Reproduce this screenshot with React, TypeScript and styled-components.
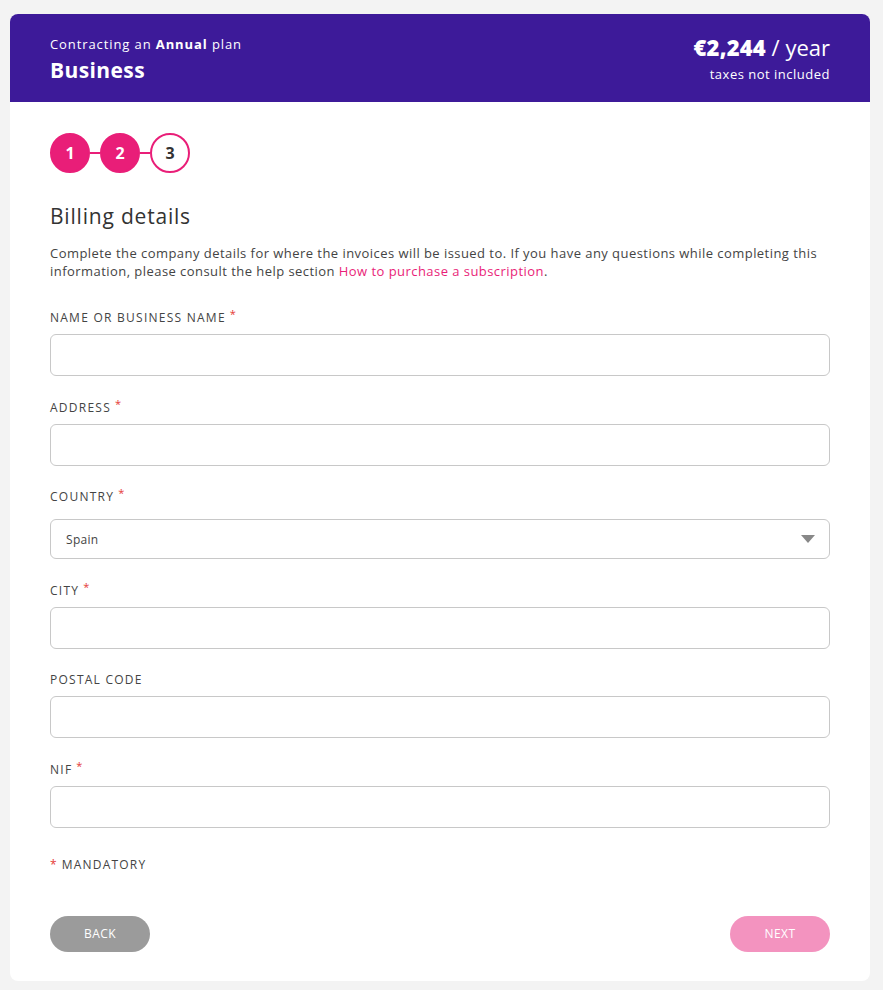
import React from 'react'
import styled, { createGlobalStyle } from 'styled-components'

const GlobalStyle = createGlobalStyle`
  html, body {
    margin: 0;
    padding: 0;
    background: #f3f3f3;
    font-family: "Open Sans", "Liberation Sans", sans-serif;
  }
  * {
    box-sizing: border-box;
  }
`

const Page = styled.div`
  padding: 14px 13px 9px 10px;
`

const Card = styled.div`
  background: #fff;
  border-radius: 8px;
  overflow: hidden;
`

const Header = styled.div`
  background: #3d1a99;
  color: #fff;
  height: 88px;
  padding: 0 40px;
  display: flex;
  justify-content: space-between;
  align-items: flex-start;
`

const PlanInfo = styled.div`
  padding-top: 22px;
`

const Subtitle = styled.div`
  font-size: 13px;
  line-height: 16px;
  letter-spacing: 0.9px;
  b {
    font-weight: 700;
  }
`

const PlanName = styled.div`
  font-size: 21px;
  font-weight: 700;
  line-height: 26px;
  letter-spacing: 0.4px;
  margin-top: 5px;
`

const PriceInfo = styled.div`
  padding-top: 19px;
  text-align: right;
`

const Price = styled.div`
  font-size: 22px;
  line-height: 28px;
  b {
    font-weight: 800;
    letter-spacing: 0.2px;
  }
`

const Taxes = styled.div`
  font-size: 13px;
  line-height: 16px;
  letter-spacing: 0.5px;
  margin-top: 5px;
`

const Body = styled.div`
  padding: 31px 40px 29px;
`

const Steps = styled.div`
  display: flex;
  align-items: center;
`

const Step = styled.div<{ done?: boolean }>`
  width: 40px;
  height: 40px;
  border-radius: 50%;
  border: 2px solid #e91e78;
  background: ${p => (p.done ? '#e91e78' : '#fff')};
  color: ${p => (p.done ? '#fff' : '#333')};
  font-weight: 700;
  font-size: 16px;
  display: flex;
  align-items: center;
  justify-content: center;
`

const Connector = styled.div`
  width: 10px;
  height: 2px;
  background: #e91e78;
`

const Title = styled.h2`
  margin: 29px 0 0;
  font-size: 21px;
  font-weight: 400;
  line-height: 28px;
  letter-spacing: 0.8px;
  color: #333;
`

const Intro = styled.p`
  margin: 14px 0 0;
  font-size: 13px;
  line-height: 18px;
  letter-spacing: 0.45px;
  color: #444;
  a {
    color: #e91e78;
    text-decoration: none;
  }
`

const Form = styled.div`
  margin-top: 30px;
  display: flex;
  flex-direction: column;
  gap: 23.5px;
`

const Field = styled.div<{ select?: boolean }>`
  display: flex;
  flex-direction: column;
  gap: ${p => (p.select ? '15px' : '9px')};
`

const Label = styled.label`
  font-size: 12px;
  line-height: 15px;
  letter-spacing: 1.25px;
  text-transform: uppercase;
  color: #444;
`

const Star = styled.sup`
  color: #e53935;
  font-size: 11px;
  margin-left: 4px;
  vertical-align: 4px;
  line-height: 0;
`

const Input = styled.input`
  height: 42px;
  border: 1px solid #c8c8c8;
  border-radius: 6px;
  background: #fff;
  padding: 0 15px;
  font-family: inherit;
  font-size: 13px;
  outline: none;
`

const SelectBox = styled.div`
  height: 40px;
  border: 1px solid #c8c8c8;
  border-radius: 6px;
  background: #fff;
  padding: 0 14px 0 15px;
  display: flex;
  align-items: center;
  justify-content: space-between;
  font-size: 12px;
  letter-spacing: 0.3px;
  color: #444;
`

const Arrow = styled.span`
  width: 0;
  height: 0;
  border-left: 7px solid transparent;
  border-right: 7px solid transparent;
  border-top: 8px solid #888;
`

const Mandatory = styled.div`
  margin-top: 29.5px;
  font-size: 12px;
  line-height: 15px;
  letter-spacing: 1.2px;
  color: #444;
  span {
    color: #e53935;
    margin-right: 4px;
  }
`

const Actions = styled.div`
  margin-top: 43.5px;
  display: flex;
  justify-content: space-between;
`

const Button = styled.button<{ tone: 'grey' | 'pink' }>`
  width: 100px;
  height: 36px;
  border: none;
  border-radius: 18px;
  background: ${p => (p.tone === 'grey' ? '#9b9b9b' : '#f393bf')};
  color: #fff;
  font-family: inherit;
  font-size: 12px;
  letter-spacing: 0.4px;
  text-transform: uppercase;
  cursor: pointer;
`

const fields = [
  { label: 'Name or business name', required: true },
  { label: 'Address', required: true },
  { label: 'Country', required: true, select: 'Spain' },
  { label: 'City', required: true },
  { label: 'Postal code', required: false },
  { label: 'NIF', required: true },
]

const App: React.FC = () => {
  return (
    <>
      <GlobalStyle />
      <Page>
        <Card>
          <Header>
            <PlanInfo>
              <Subtitle>
                Contracting an <b>Annual</b> plan
              </Subtitle>
              <PlanName>Business</PlanName>
            </PlanInfo>
            <PriceInfo>
              <Price>
                <b>€2,244</b> / year
              </Price>
              <Taxes>taxes not included</Taxes>
            </PriceInfo>
          </Header>
          <Body>
            <Steps>
              <Step done>1</Step>
              <Connector />
              <Step done>2</Step>
              <Connector />
              <Step>3</Step>
            </Steps>
            <Title>Billing details</Title>
            <Intro>
              Complete the company details for where the invoices will be issued to. If you have any
              questions while completing this information, please consult the help section{' '}
              <a href="#">How to purchase a subscription</a>.
            </Intro>
            <Form>
              {fields.map(f => (
                <Field key={f.label} select={!!f.select}>
                  <Label>
                    {f.label}
                    {f.required && <Star>*</Star>}
                  </Label>
                  {f.select ? (
                    <SelectBox>
                      {f.select}
                      <Arrow />
                    </SelectBox>
                  ) : (
                    <Input />
                  )}
                </Field>
              ))}
            </Form>
            <Mandatory>
              <span>*</span>MANDATORY
            </Mandatory>
            <Actions>
              <Button tone="grey">Back</Button>
              <Button tone="pink">Next</Button>
            </Actions>
          </Body>
        </Card>
      </Page>
    </>
  )
}

export default App
